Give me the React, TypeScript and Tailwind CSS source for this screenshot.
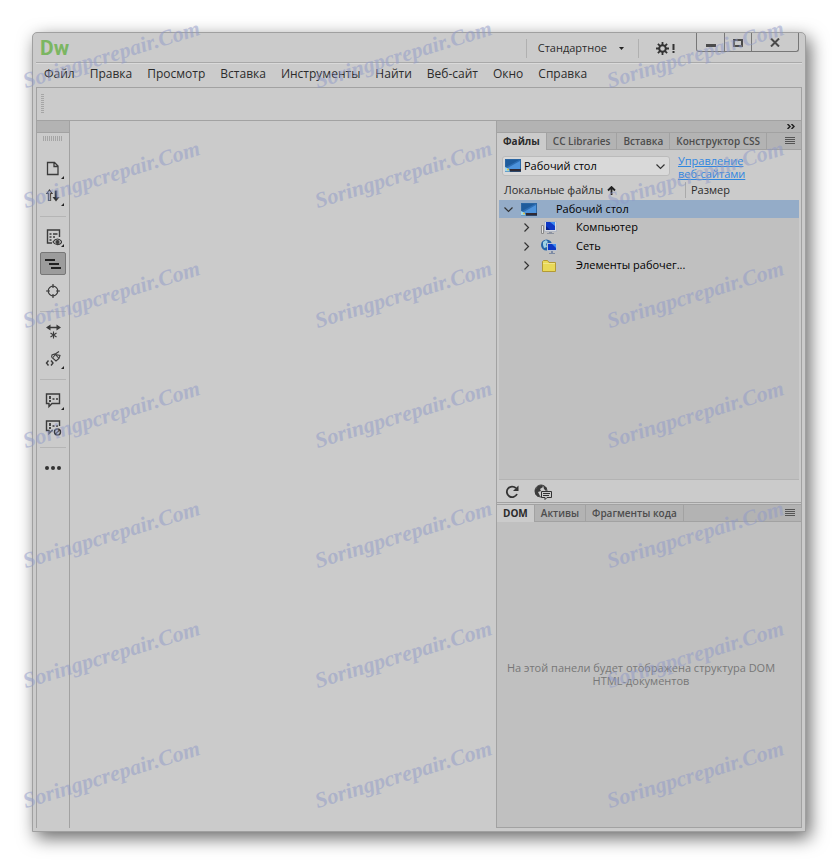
import type { ReactNode } from "react";

const menu = ["Файл", "Правка", "Просмотр", "Вставка", "Инструменты", "Найти", "Веб-сайт", "Окно", "Справка"];

function DesktopIcon({ className = "" }: { className?: string }) {
  return (
    <svg className={className} width="16" height="13" viewBox="0 0 16 13" aria-hidden="true">
      <rect x="0.5" y="0.5" width="15" height="12" fill="#2f6fb4" stroke="#2a66a3" />
      <path d="M1 10 15 2v8z" fill="#4d93dc" />
      <path d="M1 1h13L1 8z" fill="#1f5c9c" />
      <path d="M5 10h11v2.500H5z" fill="#2e2a35" />
      <path d="M0 8l3 1.500L5 12.500H0z" fill="#9fd8ee" />
      <circle cx="3" cy="10.500" r="1" fill="#e0c040" />
    </svg>
  );
}

function ComputerIcon() {
  return (
    <svg width="16" height="14" viewBox="0 0 16 14" aria-hidden="true">
      <path d="M0.500 4.500h2v8h-2z" fill="#e4e4e4" stroke="#8a8a8a" />
      <rect x="3.500" y="0.500" width="12" height="10" fill="#d6dae2" stroke="#b3b8c2" />
      <rect x="5" y="1" width="9" height="8" fill="#0d37c4" />
      <path d="M9 1h5v4z" fill="#3f8cf0" />
      <path d="M5 5l4 4H5z" fill="#06208a" />
      <path d="M8 11h3v1h2v1H6v-1h2z" fill="#8d93a0" />
    </svg>
  );
}

function NetworkIcon() {
  return (
    <svg width="16" height="16" viewBox="0 0 16 16" aria-hidden="true">
      <circle cx="5.500" cy="6" r="5.500" fill="#2464a8" />
      <path d="M2 3l3-2 2 2-2 2 1 3-3 1-1-3z" fill="#9fd2e4" />
      <rect x="6.500" y="4.500" width="9" height="7" fill="#0d37c4" stroke="#b9c2d2" />
      <path d="M11 5h4v4z" fill="#3f8cf0" />
      <path d="M10 12h2v2h2v1H8v-1h2z" fill="#7d8ba4" />
    </svg>
  );
}

function FolderIcon() {
  return (
    <svg width="16" height="14" viewBox="0 0 16 14" aria-hidden="true">
      <path d="M1.500 12.500v-10l1-1h4l1.500 2h6.500v9z" fill="#e9d958" stroke="#b39a35" />
      <path d="M2 4.500h12" stroke="#f0e588" />
    </svg>
  );
}

function Chevron({ open = false }: { open?: boolean }) {
  return (
    <svg width="9" height="9" viewBox="0 0 9 9" fill="none" stroke="#333" strokeWidth="1.200" aria-hidden="true">
      <path d={open ? "M.5 2.500l4 4 4-4" : "M2.500.5l4 4-4 4"} />
    </svg>
  );
}

function ToolButton({ label, active, more, children }: { label: string; active?: boolean; more?: boolean; children: ReactNode }) {
  return (
    <button
      type="button"
      aria-label={label}
      aria-pressed={active}
      className={`relative my-[2px] flex h-[23px] w-[26px] items-center justify-center rounded-[2px] ${
        active ? "border border-[#777] bg-[#9c9c9c]" : ""
      }`}
    >
      <svg width="18" height="18" viewBox="0 0 18 18" fill="none" stroke="#3b3b3b" strokeWidth="1.200" aria-hidden="true">
        {children}
      </svg>
      {more && (
        <svg className="absolute right-[2px] bottom-[1px]" width="3" height="3" viewBox="0 0 3 3" aria-hidden="true">
          <path d="M3 0v3H0z" fill="#222" />
        </svg>
      )}
    </button>
  );
}

function Separator() {
  return <div className="mt-[7px] mb-[6px] h-px w-[26px] bg-[#b5b5b5]" />;
}

function Rail() {
  return (
    <nav aria-label="Панель инструментов" className="flex w-[33px] shrink-0 flex-col items-center border-r border-[#a2a2a2]">
      <div className="h-3 w-full shrink-0 border-b border-[#a2a2a2] bg-[#b3b3b3]" />
      <div className="mt-[3px] mb-[14px] h-[5px] w-5 bg-[repeating-linear-gradient(90deg,#a5a5a5_0_1px,transparent_1px_2px)]" />
      <ToolButton label="Открытые документы" more>
        <path d="M3.500 2.500h7l3.500 3.500V14.500h-10.500zM10 2.500V6.500h4" strokeWidth="1.300" />
      </ToolButton>
      <ToolButton label="Управление файлами" more>
        <path d="M5.500 3L8 6.500H6.500v7h-2v-7H3z" />
        <path d="M12 3.500v8" strokeWidth="2.600" />
        <path d="M8.500 10h7L12 14.500z" fill="#333" stroke="none" />
      </ToolButton>
      <Separator />
      <ToolButton label="Интерактивный просмотр" more>
        <path d="M8 15H3.500V2h12v7M5.500 6h2M5.500 9h2M5.500 12h2M9 6h4.500M9 9h2" strokeWidth="1.400" />
        <path d="M9 14c2.500-4 6.500-4 9 0-2.500 3.500-6.500 3.500-9 0z" />
        <circle cx="13.500" cy="14" r="1.500" fill="#3b3b3b" />
      </ToolButton>
      <ToolButton label="Формат исходного кода" active>
        <path d="M1 5h10M5 9h10M7 13h10" stroke="#222" strokeWidth="2" />
      </ToolButton>
      <ToolButton label="Проверка">
        <circle cx="9" cy="9" r="4.800" />
        <path d="M9 2v4M9 12v4M2 9h4M12 9h4" />
      </ToolButton>
      <Separator />
      <ToolButton label="Свернуть тег">
        <path d="M4 4.500h11" strokeWidth="1.500" />
        <path d="M6.500 1.500v6L2 4.500zM12.500 1.500v6L17 4.500z" fill="#3b3b3b" stroke="none" />
        <path d="M9.500 8.500v7M6.500 10l6 4M12.500 10l-6 4" strokeWidth="1.100" />
      </ToolButton>
      <ToolButton label="Форматирование" more>
        <path d="M7.500 7.500L8 5l4-1.500L15 1.500M8.500 8l3-3.500 4.500 1-1 3-3 2.500-3.500-3zM11.500 4.500l3.500 4" strokeWidth="1.100" />
        <path d="M4.500 10.500L2.500 13l2 2.500M7 10.500L9 13l-2 2.500" strokeWidth="1.400" />
      </ToolButton>
      <Separator />
      <ToolButton label="Применить комментарий" more>
        <path d="M2.500 3h13v9.500H8l-3 3v-3H2.500z" strokeWidth="1.400" />
        <path d="M6 5v3M6 9v2" strokeWidth="1.800" />
        <path d="M8.500 8h2M12 8h2" strokeWidth="1.400" />
      </ToolButton>
      <ToolButton label="Удалить комментарий">
        <path d="M15.500 8V3h-13v9.500H5v3l3-3h1" strokeWidth="1.400" />
        <path d="M6 5v3M6 9v2" strokeWidth="1.800" />
        <path d="M8.500 8h2M12 8h2" strokeWidth="1.400" />
        <circle cx="13.500" cy="14" r="3" strokeWidth="1.400" />
        <path d="M11.500 16l4-4" />
      </ToolButton>
      <Separator />
      <ToolButton label="Настроить панель инструментов">
        <g fill="#333" stroke="none">
          <circle cx="3" cy="9" r="2" />
          <circle cx="9" cy="9" r="2" />
          <circle cx="15" cy="9" r="2" />
        </g>
      </ToolButton>
    </nav>
  );
}

function PanelTabs({ tabs }: { tabs: string[] }) {
  return (
    <div role="tablist" className="flex h-[17px] shrink-0 bg-[#b3b3b3] text-[10px] leading-4 font-semibold text-[#4d4d4d]">
      {tabs.map((tab, i) => (
        <button
          key={tab}
          type="button"
          role="tab"
          aria-selected={i === 0}
          className={`border-r border-[#a2a2a2] px-[6px] pb-px whitespace-nowrap ${i === 0 ? "bg-[#cbcbcb] font-bold text-[#2b2b2b]" : "border-b"}`}
        >
          {tab}
        </button>
      ))}
      <div className="flex flex-1 items-center justify-end border-b border-[#a2a2a2] pr-[6px]">
        <button type="button" aria-label="Меню панели">
          <svg className="block" width="10" height="8" viewBox="0 0 10 8" aria-hidden="true">
            <path d="M0 .5h10M0 2.500h10M0 4.500h10M0 6.500h10" stroke="#555" />
          </svg>
        </button>
      </div>
    </div>
  );
}

const entries = [
  { name: "Компьютер", icon: <ComputerIcon /> },
  { name: "Сеть", icon: <NetworkIcon /> },
  { name: "Элементы рабочег...", icon: <FolderIcon /> },
];

function FilesPanel() {
  return (
    <section className="flex h-[370px] shrink-0 flex-col border-b border-[#a2a2a2]">
      <PanelTabs tabs={["Файлы", "CC Libraries", "Вставка", "Конструктор CSS"]} />
      <div className="flex h-[30px] shrink-0 items-start gap-2 pt-1 pl-[5px] text-[11px]">
        <div className="relative mt-[2px] h-5 w-[168px]">
          <select
            aria-label="Веб-сайт"
            className="h-5 w-full appearance-none rounded-[3px] border border-[#bbb] bg-[#d9d9d9] pl-[21px] text-[11px] leading-[18px] text-black"
          >
            <option>Рабочий стол</option>
          </select>
          <DesktopIcon className="absolute top-[3px] left-[3px]" />
          <span className="absolute top-[6px] right-[5px]">
            <Chevron open />
          </span>
        </div>
        <a href="#sites" className="leading-[13px] text-[#2f86e0] underline">
          Управление
          <br />
          веб-сайтами
        </a>
      </div>
      <div className="mx-[2px] flex-1 border-b border-[#b3b3b3] bg-[#c0c0c0]">
        <table className="w-full table-fixed text-left text-[11px] text-black">
          <colgroup>
            <col className="w-[186px]" />
            <col />
          </colgroup>
          <thead className="bg-[#cbcbcb] text-[#2b2b2b]">
            <tr className="h-[20px]">
              <th className="p-0 pl-[5px] font-normal">
                <span className="flex items-center gap-1 leading-4">
                  Локальные файлы
                  <svg width="9" height="9" viewBox="0 0 9 9" aria-hidden="true">
                    <path d="M4.500 9V1.500M1 4.500L4.500 1 8 4.500" fill="none" stroke="#222" strokeWidth="1.800" />
                  </svg>
                </span>
              </th>
              <th className="p-0 font-normal">
                <span className="block border-l border-[#aaa] pl-[5px] leading-4">Размер</span>
              </th>
            </tr>
          </thead>
          <tbody>
            <tr className="h-[18px] bg-[#94acc8]">
              <td className="p-0" colSpan={2}>
                <div className="flex h-[18px] items-center pl-[5px]">
                  <button type="button" aria-label="Свернуть">
                    <Chevron open />
                  </button>
                  <DesktopIcon className="ml-2" />
                  <span className="ml-[19px]">Рабочий стол</span>
                </div>
              </td>
            </tr>
            {entries.map((row) => (
              <tr key={row.name} className="h-[19px]">
                <td className="p-0" colSpan={2}>
                  <div className="flex h-[19px] items-center pl-[23px]">
                    <button type="button" aria-label={`Развернуть ${row.name}`}>
                      <Chevron />
                    </button>
                    <span className="ml-[10px]">{row.icon}</span>
                    <span className="ml-[19px]">{row.name}</span>
                  </div>
                </td>
              </tr>
            ))}
          </tbody>
        </table>
      </div>
      <div className="flex h-[22px] shrink-0 items-center gap-[14px] pt-px pl-2">
        <button type="button" aria-label="Обновить">
          <svg width="15" height="14" viewBox="0 0 15 14" fill="none" aria-hidden="true">
            <path d="M12 9A5.300 5.300 0 1 1 11 3.200" stroke="#333" strokeWidth="1.800" />
            <path d="M13.500.5v5.500H8z" fill="#333" />
          </svg>
        </button>
        <button type="button" aria-label="Журнал">
          <svg width="18" height="16" viewBox="0 0 18 16" aria-hidden="true">
            <circle cx="7" cy="7" r="6" fill="none" stroke="#3b3b3b" />
            <path d="M1 6l3-4 4-1 1 2-3 2 1 2-3 1 2 4-2 1-3-3zM9 1l4 3-1 3-2-2z" fill="#3b3b3b" />
            <path d="M7.500 7.500h10v6H13L11 15.500v-2H7.500z" fill="#cbcbcb" stroke="#333" />
            <path d="M9 9.500h7M9 11.500h6" stroke="#333" />
          </svg>
        </button>
      </div>
    </section>
  );
}

function DomPanel() {
  return (
    <section className="mt-px flex flex-1 flex-col border-t border-b border-[#a2a2a2] bg-[#c0c0c0]">
      <PanelTabs tabs={["DOM", "Активы", "Фрагменты кода"]} />
      <div className="flex flex-1 items-center justify-center pr-5 pb-[2px] pl-1">
        <p className="text-center text-[11px] leading-[13px] text-[#777]">
          На этой панели будет отображена структура DOM HTML-документов
        </p>
      </div>
    </section>
  );
}

function Watermarks() {
  return (
    <div
      aria-hidden="true"
      className="pointer-events-none absolute inset-0 grid auto-rows-[120px] grid-cols-[repeat(3,292px)] overflow-hidden pt-[69px] pl-[27px] select-none"
    >
      {Array.from({ length: 21 }, (_, i) => (
        <span
          key={i}
          className="h-6 origin-bottom-left -rotate-[17deg] font-['Liberation_Serif',serif] text-[22px] leading-6 font-bold whitespace-nowrap text-[#8f99c8]/50 italic"
        >
          Soringpcrepair.Com
        </span>
      ))}
    </div>
  );
}

export default function App() {
  return (
    <div className="relative flex min-h-screen bg-white p-8 font-['Open_Sans','Noto_Sans',sans-serif]">
      <main className="flex min-w-0 flex-1 flex-col rounded-t-[5px] border border-[#a0a0a0] bg-[#cbcbcb] px-[3px] pb-[3px] shadow-[4px_6px_18px_rgba(0,0,0,0.6)]">
        <header className="flex h-[30px] shrink-0 items-start border-b border-[#a9a9a9]">
          <h1 className="flex-1 pl-1 font-[Roboto,sans-serif] text-[21px] leading-[30px] font-bold text-[#7bb662]">Dw</h1>
          <div className="mt-[6px] flex h-[19px] items-center border-r border-l border-[#b0b0b0] pr-[14px] pl-[11px] text-[11px] text-[#2b2b2b]">
            <button type="button" className="flex items-center gap-3">
              Стандартное
              <svg width="5" height="3" viewBox="0 0 5 3" aria-hidden="true">
                <path d="M0 0h5L2.500 3z" fill="#222" />
              </svg>
            </button>
          </div>
          <button type="button" aria-label="Параметры синхронизации" className="mt-[9px] mr-[21px] ml-[17px] flex items-center gap-[3px]">
            <svg width="13" height="13" viewBox="0 0 13 13" fill="none" stroke="#333" aria-hidden="true">
              <circle cx="6.500" cy="6.500" r="3.300" strokeWidth="2" />
              <path
                d="M6.500 0v3M6.500 10v3M0 6.500h3M10 6.500h3M1.900 1.900l2 2M9.100 9.100l2 2M11.100 1.900l-2 2M3.900 9.100l-2 2"
                strokeWidth="1.800"
              />
            </svg>
            <svg width="3" height="9" viewBox="0 0 3 9" aria-hidden="true">
              <path d="M.5 0h2v6h-2zM.5 7h2v2h-2z" fill="#333" />
            </svg>
          </button>
          <div className="mr-[3px] flex h-[19px] overflow-hidden rounded-b-[3px] border border-t-0 border-[#777]">
            <button type="button" aria-label="Свернуть окно" className="flex w-[28px] items-center justify-center border-r border-[#777]">
              <span className="mt-[6px] h-[3px] w-[10px] bg-[#4b4b4b]" />
            </button>
            <button type="button" aria-label="Развернуть окно" className="flex w-[27px] items-center justify-center border-r border-[#777]">
              <svg className="mt-[2px]" width="10" height="8" viewBox="0 0 10 8" aria-hidden="true">
                <path d="M1 1h8v6H1z" fill="none" stroke="#4b4b4b" strokeWidth="2" />
              </svg>
            </button>
            <button type="button" aria-label="Закрыть окно" className="flex w-[46px] items-center justify-center">
              <svg width="10" height="9" viewBox="0 0 10 9" aria-hidden="true">
                <path d="M1 .5l8 8M9 .5l-8 8" stroke="#4b4b4b" strokeWidth="2" />
              </svg>
            </button>
          </div>
        </header>
        <nav aria-label="Главное меню" className="flex h-6 shrink-0 items-center gap-[15px] border-t border-[#dadada] pb-[3px] pl-2 text-[12px] text-[#2b2b2b]">
          {menu.map((item) => (
            <button key={item} type="button" className="whitespace-nowrap">
              {item}
            </button>
          ))}
        </nav>
        <div className="flex flex-1 flex-col border-x border-t border-[#a2a2a2]">
          <div className="h-[33px] shrink-0 border-b border-[#a2a2a2] pt-[6px] pl-1">
            <div className="h-5 w-[3px] bg-[repeating-linear-gradient(180deg,#a5a5a5_0_1px,transparent_1px_2px)]" />
          </div>
          <div className="flex flex-1">
            <Rail />
            <div className="flex-1" />
            <aside className="flex w-[305px] shrink-0 flex-col border-l border-[#a2a2a2]">
              <div className="flex h-3 shrink-0 items-center justify-end border-b border-[#a2a2a2] bg-[#b3b3b3] pr-[6px]">
                <button type="button" aria-label="Свернуть панели">
                  <svg className="block" width="8" height="5" viewBox="0 0 8 5" aria-hidden="true">
                    <path d="M.5 0L3 2.500.5 5M4.500 0L7 2.500 4.500 5" fill="none" stroke="#222" strokeWidth="1.500" />
                  </svg>
                </button>
              </div>
              <FilesPanel />
              <DomPanel />
            </aside>
          </div>
        </div>
      </main>
      <Watermarks />
    </div>
  );
}
